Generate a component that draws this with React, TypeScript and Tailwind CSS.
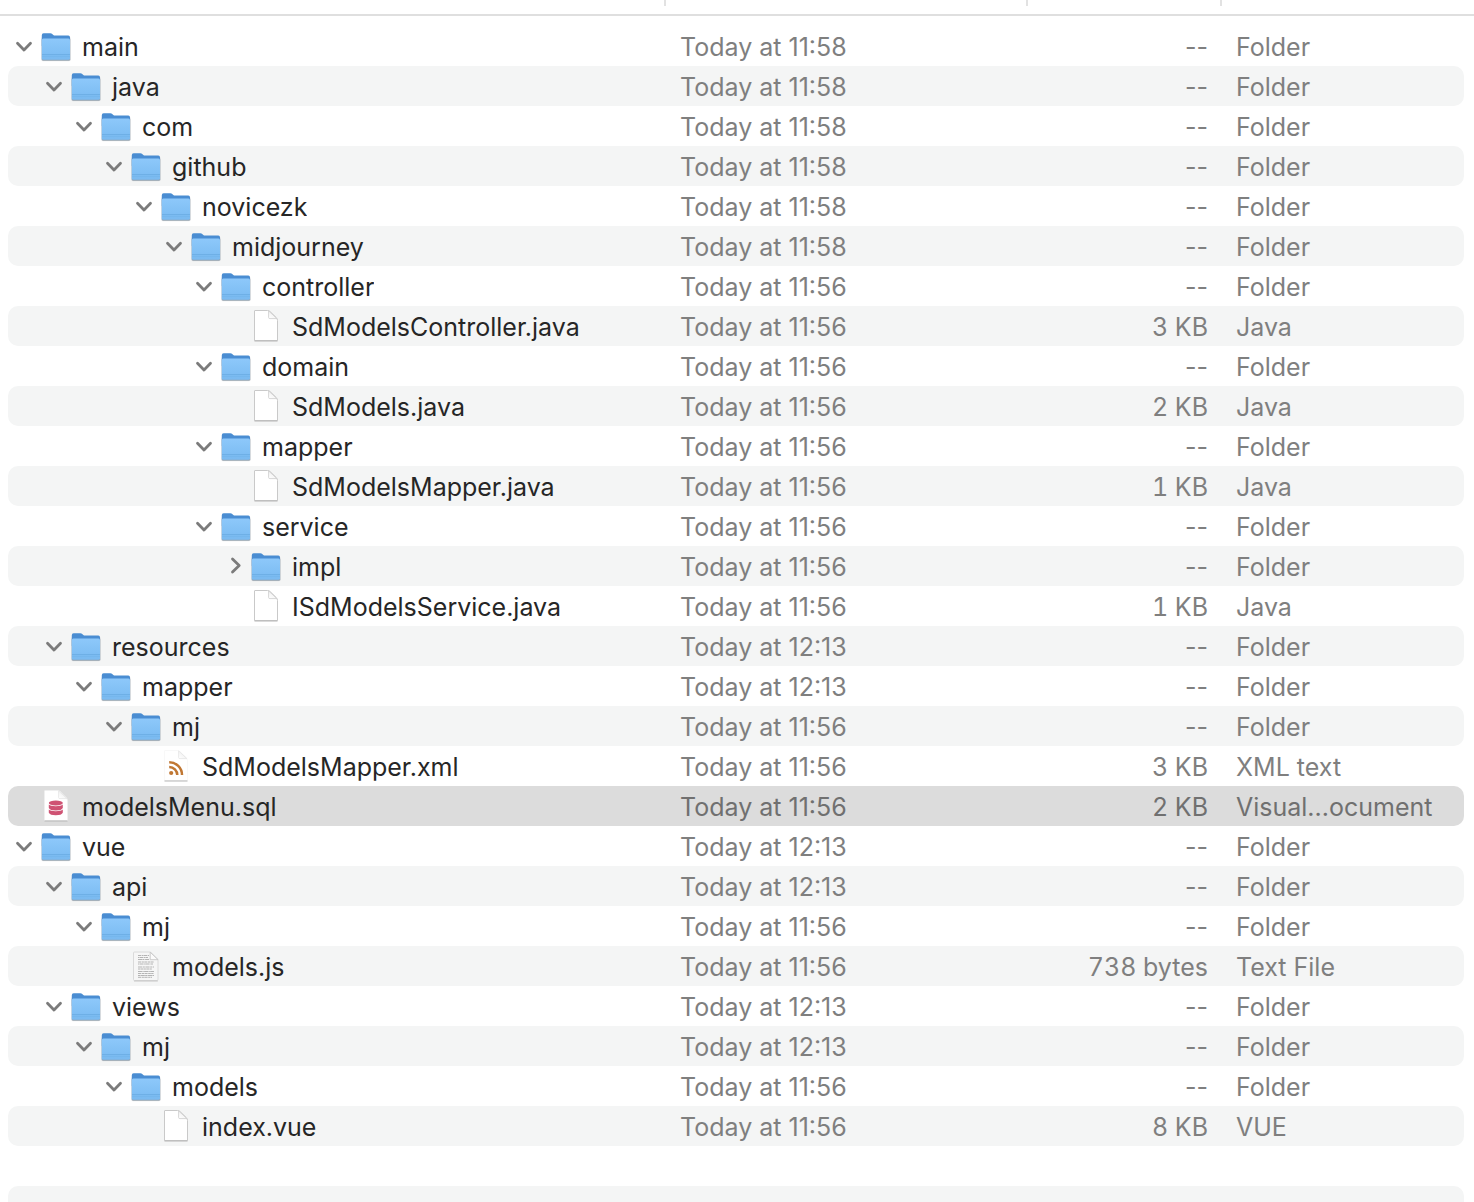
import { useState } from "react";

type Icon = "folder" | "file" | "xml" | "sql" | "text";

interface Entry {
  id: number;
  depth: number;
  name: string;
  icon: Icon;
  date: string;
  size: string;
  kind: string;
}

const folder = (id: number, depth: number, name: string, date: string): Entry => ({
  id,
  depth,
  name,
  icon: "folder",
  date: `Today at ${date}`,
  size: "--",
  kind: "Folder",
});

const file = (
  id: number,
  depth: number,
  name: string,
  size: string,
  kind: string,
  icon: Icon = "file",
): Entry => ({ id, depth, name, icon, date: "Today at 11:56", size, kind });

const entries: Entry[] = [
  folder(1, 0, "main", "11:58"),
  folder(2, 1, "java", "11:58"),
  folder(3, 2, "com", "11:58"),
  folder(4, 3, "github", "11:58"),
  folder(5, 4, "novicezk", "11:58"),
  folder(6, 5, "midjourney", "11:58"),
  folder(7, 6, "controller", "11:56"),
  file(8, 7, "SdModelsController.java", "3 KB", "Java"),
  folder(9, 6, "domain", "11:56"),
  file(10, 7, "SdModels.java", "2 KB", "Java"),
  folder(11, 6, "mapper", "11:56"),
  file(12, 7, "SdModelsMapper.java", "1 KB", "Java"),
  folder(13, 6, "service", "11:56"),
  folder(14, 7, "impl", "11:56"),
  file(15, 7, "ISdModelsService.java", "1 KB", "Java"),
  folder(16, 1, "resources", "12:13"),
  folder(17, 2, "mapper", "12:13"),
  folder(18, 3, "mj", "11:56"),
  file(19, 4, "SdModelsMapper.xml", "3 KB", "XML text", "xml"),
  file(20, 0, "modelsMenu.sql", "2 KB", "Visual...ocument", "sql"),
  folder(21, 0, "vue", "12:13"),
  folder(22, 1, "api", "12:13"),
  folder(23, 2, "mj", "11:56"),
  file(24, 3, "models.js", "738 bytes", "Text File", "text"),
  folder(25, 1, "views", "12:13"),
  folder(26, 2, "mj", "12:13"),
  folder(27, 3, "models", "11:56"),
  file(28, 4, "index.vue", "8 KB", "VUE"),
];

function visibleEntries(closed: Set<number>): Entry[] {
  const result: Entry[] = [];
  let limit = Infinity;
  for (const entry of entries) {
    if (entry.depth > limit) continue;
    limit = closed.has(entry.id) ? entry.depth : Infinity;
    result.push(entry);
  }
  return result;
}

function FolderIcon() {
  return (
    <svg viewBox="0 0 32 40" className="h-10 w-8 shrink-0" aria-hidden="true">
      <defs>
        <linearGradient id="folder-front" x1="0" y1="0" x2="0" y2="1">
          <stop offset="0" stopColor="#8dc8fa" />
          <stop offset="0.8" stopColor="#7dbdf3" />
          <stop offset="1" stopColor="#7bbaf0" />
        </linearGradient>
      </defs>
      <rect x="1" y="11" width="30" height="24.3" rx="2" fill="#8a8f94" opacity="0.2" />
      <rect x="1.8" y="12" width="28.4" height="22.7" rx="1.5" fill="#60788c" opacity="0.6" />
      <path
        d="M1.8 9.2Q1.8 7.3 3.6 7.3H10.3Q11.6 7.3 12.5 8.3L13.3 9Q14 9.6 15.2 9.6H28.3Q30 9.6 30 11.3V20H1.8Z"
        fill="#4a8dd2"
      />
      <path
        d="M1.8 14.2Q1.8 12.6 3.3 12.6H28.5Q30 12.6 30 14.2V32.2Q30 33.8 28.4 33.8H3.4Q1.8 33.8 1.8 32.2Z"
        fill="url(#folder-front)"
      />
      <path d="M2 28.6H30" stroke="#68a9df" strokeWidth="0.8" />
      <path d="M2 30.6H30" stroke="#71b1e7" strokeWidth="0.6" />
    </svg>
  );
}

function DocumentIcon({ icon }: { icon: Icon }) {
  const faint = icon === "xml" || icon === "sql";
  return (
    <svg viewBox="0 0 32 40" className="h-10 w-8 shrink-0" aria-hidden="true">
      <defs>
        <linearGradient id="page-fold" x1="0" y1="1" x2="1" y2="0">
          <stop offset="0" stopColor="#ffffff" />
          <stop offset="0.45" stopColor="#f6f6f6" />
          <stop offset="0.6" stopColor="#e2e2e2" />
          <stop offset="1" stopColor="#f5f5f5" />
        </linearGradient>
      </defs>
      {icon === "text" ? (
        <>
          <path
            d="M4.5 6H20.5L28 13.5V33.5Q28 34.5 27 34.5H4.5Q3.5 34.5 3.5 33.5V7Q3.5 6 4.5 6Z"
            fill="#f6f6f6"
            stroke="#dadada"
            strokeWidth="1"
          />
          <path d="M4 35H27.8" stroke="#c2c2c2" strokeWidth="0.9" />
          <g stroke="#b4b4b4" strokeWidth="1">
            <path d="M8 9.5H19" strokeDasharray="3 0.6 2 0.4" />
            <path d="M8 11.5H18" strokeDasharray="1 0.4 4 0.6" />
            <path d="M8 13.5H19" strokeDasharray="4 0.4 2 0.7" />
            <path d="M8 16H24" strokeDasharray="3 0.6 2.3 0.4" />
            <path d="M8 18H23" strokeDasharray="1 0.4 4 0.4" />
            <path d="M8 21H24" strokeDasharray="4.2 0.6 2 0.6" />
            <path d="M8 23H22" strokeDasharray="2 0.4 3.1 0.4" />
            <path d="M8 25.5H24" strokeDasharray="4 0.4 1.3 0.4" />
            <path d="M8 27.5H23.5" strokeDasharray="3 0.6 2.6 0.4" />
            <path d="M8 29.5H24" strokeDasharray="2 0.4 4.4 0.4" />
            <path d="M8 31.3H22" strokeDasharray="3.3 0.6 2 0.4" />
          </g>
          <path d="M20.2 6.2V13.7H28Z" fill="#fbfbfb" stroke="#c6c6c6" strokeWidth="0.9" />
        </>
      ) : (
        <>
          <path
            d="M5 4.5H17.5Q19 4.5 20.2 5.6L26.2 11.5Q27.5 12.8 27.5 14.5V34.5H4.5V5Q4.5 4.5 5 4.5Z"
            fill="#fff"
            stroke={faint ? "#f0f0f0" : "#c9c9c9"}
            strokeWidth={faint ? 0.5 : 1}
          />
          <path d="M4.5 35H27.5" stroke="#b5b5b5" strokeWidth="1" />
          <path
            d="M18.6 4.9V11.4Q18.6 12.6 19.8 12.6H26.9Z"
            fill="url(#page-fold)"
            stroke={faint ? "#e4e4e4" : "#cccccc"}
            strokeWidth="0.8"
          />
        </>
      )}
      {icon === "xml" && (
        <g fill="none" stroke="#c07733" strokeWidth="2.5">
          <path d="M9.2 16.2A12.8 12.8 0 0 1 22 29" />
          <path d="M9.2 20.9A8.1 8.1 0 0 1 17.3 29" />
          <circle cx="11.2" cy="27" r="2.1" fill="#c07733" stroke="none" />
        </g>
      )}
      {icon === "sql" && (
        <g fill="#cf5273">
          <ellipse cx="15.8" cy="17" rx="7" ry="2.4" />
          <path d="M8.8 18.6Q10.5 20.3 15.8 20.3T22.8 18.6V22Q21.6 24.5 15.8 24.5T8.8 22Z" />
          <path d="M8.8 23.5Q10.5 25.2 15.8 25.2T22.8 23.5V26.8Q21.6 29.3 15.8 29.3T8.8 26.8Z" />
        </g>
      )}
    </svg>
  );
}

function Chevron({ open }: { open: boolean }) {
  return (
    <svg
      viewBox="0 0 32 40"
      className="h-10 w-8"
      fill="none"
      stroke="#7b7b7b"
      strokeWidth="2.8"
      strokeLinecap="round"
      strokeLinejoin="round"
      aria-hidden="true"
    >
      <path d={open ? "M9.5 17.3L16 24L22.5 17.3" : "M14.5 13L21.2 19.5L14.5 26"} />
    </svg>
  );
}

export default function App() {
  const [closed, setClosed] = useState<Set<number>>(new Set([14]));
  const [selected, setSelected] = useState(20);
  const rows = visibleEntries(closed);

  const toggle = (id: number) => {
    const next = new Set(closed);
    if (!next.delete(id)) next.add(id);
    setClosed(next);
  };

  return (
    <main className="flex min-h-screen flex-col bg-white font-['Inter','Liberation_Sans',sans-serif] text-[25px] leading-[38px] text-[#262626]">
      <div className="mb-2.5 flex h-4 items-start border-b-2 border-[#dfdfdf] pr-2.5 pl-2">
        <div className="h-1.5 flex-1" />
        <div className="h-1.5 w-[362px] border-l-2 border-[#e2e2e2]" />
        <div className="h-1.5 w-[194px] border-l-2 border-[#e2e2e2]" />
        <div className="h-1.5 w-[244px] border-l-2 border-[#e2e2e2]" />
      </div>
      <div className="pr-2.5 pl-2">
        <table className="w-full table-fixed border-separate border-spacing-0" aria-label="Files">
          <colgroup>
            <col />
            <col className="w-[362px]" />
            <col className="w-[194px]" />
            <col className="w-[244px]" />
          </colgroup>
          <tbody>
            {rows.map((row, index) => {
              const active = row.id === selected;
              const fill = active ? "bg-[#dcdcdc]" : index % 2 ? "bg-[#f4f5f5]" : "bg-white";
              const muted = active ? "text-[#707070]" : "text-[#7f7f7f]";
              const figures = row.icon === "folder" ? "" : "tabular-nums";
              return (
                <tr key={row.id} aria-selected={active} onClick={() => setSelected(row.id)}>
                  <td className={`h-10 rounded-l-[10px] p-0 ${fill}`}>
                    <div className="flex h-10 items-center" style={{ paddingLeft: row.depth * 30 }}>
                      {row.icon === "folder" ? (
                        <button
                          type="button"
                          className="h-10 w-8 shrink-0"
                          aria-label={`Toggle ${row.name}`}
                          aria-expanded={!closed.has(row.id)}
                          onClick={() => toggle(row.id)}
                        >
                          <Chevron open={!closed.has(row.id)} />
                        </button>
                      ) : (
                        <span className="w-8 shrink-0" />
                      )}
                      {row.icon === "folder" ? <FolderIcon /> : <DocumentIcon icon={row.icon} />}
                      <span className="truncate pt-0.5 pl-2.5">{row.name}</span>
                    </div>
                  </td>
                  <td className={`h-10 truncate p-0 pt-0.5 pl-4 ${fill} ${muted}`}>{row.date}</td>
                  <td className={`h-10 truncate p-0 pt-0.5 pr-3 text-right ${figures} ${fill} ${muted}`}>{row.size}</td>
                  <td className={`h-10 truncate rounded-r-[10px] p-0 pt-0.5 pl-4 ${fill} ${muted}`}>{row.kind}</td>
                </tr>
              );
            })}
          </tbody>
        </table>
      </div>
      <div className="flex-1 basis-0 overflow-hidden pr-2.5 pl-2">
        {rows.length % 2 === 0 && <div className="h-10" />}
        <div className="h-10 rounded-[10px] bg-[#f4f5f5]" />
      </div>
    </main>
  );
}
